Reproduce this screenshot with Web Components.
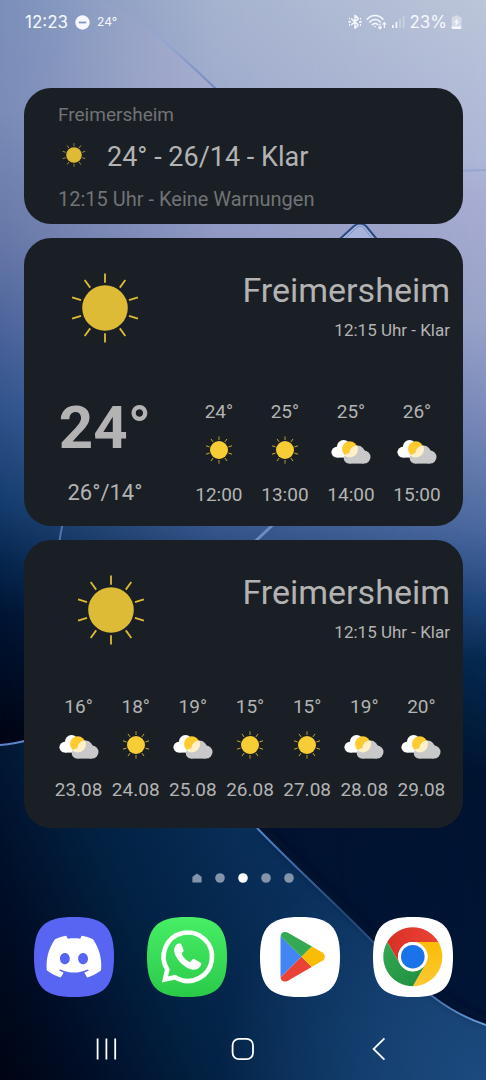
<!DOCTYPE html>
<html lang="de">
<head>
<meta charset="utf-8">
<meta name="viewport" content="width=device-width, initial-scale=1">
<title>Startbildschirm</title>
<style>
  body {
    margin: 0;
    background: #04183a;
    font-family: Roboto, "Liberation Sans", sans-serif;
  }
</style>
</head>
<body>
<home-screen>
  <status-bar time="12:23" temp="24°" battery="23%"></status-bar>

  <main>
    <weather-card>
      <weather-summary place="Freimersheim" icon="sun" text="24° - 26/14 - Klar" note="12:15 Uhr - Keine Warnungen"></weather-summary>
    </weather-card>

    <weather-card>
      <weather-head place="Freimersheim" status="12:15 Uhr - Klar" style="--split: 38fr 62fr"></weather-head>
      <weather-now temp="24°" range="26°/14°">
        <forecast-item temp="24°" icon="sun" label="12:00"></forecast-item>
        <forecast-item temp="25°" icon="sun" label="13:00"></forecast-item>
        <forecast-item temp="25°" icon="cloud" label="14:00"></forecast-item>
        <forecast-item temp="26°" icon="cloud" label="15:00"></forecast-item>
      </weather-now>
    </weather-card>

    <weather-card>
      <weather-head place="Freimersheim" status="12:15 Uhr - Klar" style="--split: 41fr 59fr"></weather-head>
      <weather-week>
        <forecast-item temp="16°" icon="cloud" label="23.08"></forecast-item>
        <forecast-item temp="18°" icon="sun" label="24.08"></forecast-item>
        <forecast-item temp="19°" icon="cloud" label="25.08"></forecast-item>
        <forecast-item temp="15°" icon="sun" label="26.08"></forecast-item>
        <forecast-item temp="15°" icon="sun" label="27.08"></forecast-item>
        <forecast-item temp="19°" icon="cloud" label="28.08"></forecast-item>
        <forecast-item temp="20°" icon="cloud" label="29.08"></forecast-item>
      </weather-week>
    </weather-card>
  </main>

  <page-dots count="5" active="2"></page-dots>

  <app-dock>
    <app-icon name="Discord" icon="discord"></app-icon>
    <app-icon name="WhatsApp" icon="whatsapp"></app-icon>
    <app-icon name="Play Store" icon="play"></app-icon>
    <app-icon name="Chrome" icon="chrome"></app-icon>
  </app-dock>

  <nav-bar></nav-bar>
</home-screen>

<script>
  // Attaches an open shadow root and fills it with styles and markup.
  class BaseElement extends HTMLElement {
    constructor() {
      super();
      this.attachShadow({ mode: "open" });
    }

    connectedCallback() {
      this.shadowRoot.innerHTML = `<style>${this.styles()}</style>${this.markup()}`;
    }

    attr(name) {
      return this.getAttribute(name) || "";
    }
  }

  class HomeScreen extends BaseElement {
    styles() {
      return `
        :host {
          display: flex;
          flex-direction: column;
          position: relative;
          min-height: 100vh;
          overflow: hidden;
        }
        .wallpaper {
          position: absolute;
          inset: 0;
          width: 100%;
          height: 100%;
          z-index: -1;
        }
        ::slotted(main) {
          display: flex;
          flex-direction: column;
          gap: 14px;
          margin: 44px 23px 45px 24px;
        }
      `;
    }

    markup() {
      return `
        <svg class="wallpaper" viewBox="0 0 486 1080" preserveAspectRatio="none" aria-hidden="true">
          <defs>
            <linearGradient id="left" x2="0" y2="1">
              <stop offset="0" stop-color="#7a8fba"/>
              <stop offset=".1" stop-color="#7b8cb8"/>
              <stop offset=".22" stop-color="#6778a8"/>
              <stop offset=".3" stop-color="#4d659c"/>
              <stop offset=".38" stop-color="#2f538b"/>
              <stop offset=".47" stop-color="#143b6c"/>
              <stop offset=".52" stop-color="#06264d"/>
              <stop offset=".57" stop-color="#001433"/>
              <stop offset=".68" stop-color="#000515"/>
              <stop offset=".76" stop-color="#00102c"/>
            </linearGradient>
            <linearGradient id="right" x2="0" y2="1">
              <stop offset="0" stop-color="#bcc5d9"/>
              <stop offset=".15" stop-color="#adb6d6"/>
              <stop offset=".18" stop-color="#a9add3"/>
              <stop offset=".3" stop-color="#98a2c8"/>
              <stop offset=".4" stop-color="#7385b6"/>
              <stop offset=".49" stop-color="#4a689f"/>
              <stop offset=".56" stop-color="#1c4479"/>
              <stop offset=".61" stop-color="#04294f"/>
              <stop offset=".72" stop-color="#001330"/>
              <stop offset="1" stop-color="#001638"/>
            </linearGradient>
            <linearGradient id="fade">
              <stop offset="0" stop-color="#000"/>
              <stop offset=".45" stop-color="#aaa"/>
              <stop offset="1" stop-color="#fff"/>
            </linearGradient>
            <mask id="across"><rect width="486" height="1080" fill="url(#fade)"/></mask>
            <linearGradient id="floor" gradientUnits="userSpaceOnUse" x1="-30" y1="1060" x2="420" y2="860">
              <stop offset="0" stop-color="#00020e"/>
              <stop offset=".2" stop-color="#000d26"/>
              <stop offset=".42" stop-color="#022142"/>
              <stop offset=".68" stop-color="#082d57"/>
              <stop offset="1" stop-color="#0f3766"/>
            </linearGradient>
            <radialGradient id="glow" gradientUnits="userSpaceOnUse" cx="480" cy="1080" r="260">
              <stop offset="0" stop-color="#1c4a7e"/>
              <stop offset="1" stop-color="#1c4a7e" stop-opacity="0"/>
            </radialGradient>
            <linearGradient id="petal" gradientUnits="userSpaceOnUse" x1="60" y1="40" x2="190" y2="100">
              <stop offset="0" stop-color="#a2a5c8" stop-opacity="0"/>
              <stop offset="1" stop-color="#a9abd0" stop-opacity=".5"/>
            </linearGradient>
            <linearGradient id="edge" gradientUnits="userSpaceOnUse" x1="100" y1="0" x2="215" y2="88">
              <stop offset="0" stop-color="#94aad2" stop-opacity="0"/>
              <stop offset=".5" stop-color="#8fa6d2" stop-opacity=".7"/>
              <stop offset="1" stop-color="#7389c0"/>
            </linearGradient>
            <linearGradient id="rim" gradientUnits="userSpaceOnUse" x1="257" y1="828" x2="486" y2="1025">
              <stop offset="0" stop-color="#4f87c4"/>
              <stop offset=".4" stop-color="#204877"/>
              <stop offset=".7" stop-color="#2d5a8e"/>
              <stop offset="1" stop-color="#6a9dd6"/>
            </linearGradient>
            <filter id="soft" x="-10%" y="-10%" width="120%" height="120%"><feGaussianBlur stdDeviation="4"/></filter>
          </defs>
          <rect width="486" height="1080" fill="url(#left)"/>
          <rect width="486" height="1080" fill="url(#right)" mask="url(#across)"/>

          <path d="M60 0H100C145 20 180 55 216 89V110H40Z" fill="url(#petal)"/>
          <path d="M100 0C145 20 180 55 216 89" fill="none" stroke="url(#edge)" stroke-width="2"/>
          <path d="M440 173Q463 170 486 170" fill="none" stroke="#94a6cf" stroke-width="2"/>

          <path d="M330 248 354 227Q360 222 366 227L384 248Z" fill="#a7b3da"/>
          <path d="M330 248 354 226Q360 221 366 226L384 248" fill="none" stroke="#2c4a80" stroke-width="2"/>
          <path d="M336 248 356 228Q360 224 364 228L379 248" fill="none" stroke="#7d94c6" stroke-width="1"/>

          <path d="M64 520Q60 532 59 548" fill="none" stroke="#4c74ad" stroke-width="2"/>
          <path d="M278 520 246 550" fill="none" stroke="#6d8cc2" stroke-width="3"/>
          <path d="M284 520 252 550" fill="none" stroke="#2f5590" stroke-width="1"/>

          <path d="M0 745Q40 741 80 720L257 828C300 872 340 908 372 941 410 978 440 1010 486 1025V1080H0Z" fill="url(#floor)"/>
          <path d="M0 745Q40 741 80 720L257 828C300 872 340 908 372 941 410 978 440 1010 486 1025V1080H0Z" fill="url(#glow)"/>
          <path d="M0 745Q15 744 32 739" fill="none" stroke="#5b86cb" stroke-width="2"/>
          <path d="M262 826C305 870 345 906 377 938 415 974 445 1006 490 1020" fill="none" stroke="#000c26" stroke-width="7" opacity=".6" filter="url(#soft)"/>
          <path d="M257 828C300 872 340 908 372 941 410 978 440 1010 486 1025" fill="none" stroke="url(#rim)" stroke-width="2"/>
        </svg>
        <slot></slot>
      `;
    }
  }

  class StatusBar extends BaseElement {
    styles() {
      return `
        :host {
          display: flex;
          align-items: center;
          justify-content: space-between;
          height: 44px;
          padding: 0 24px 0 25px;
          color: #f6f8fd;
          font-family: Inter, Roboto, sans-serif;
          font-size: 17px;
          line-height: 20px;
        }
        div {
          display: flex;
          align-items: center;
        }
        .left { gap: 7px; }
        .right { gap: 4px; }
        small { font-size: 12px; }
        svg { display: block; }
      `;
    }

    markup() {
      return `
        <div class="left">
          <time>${this.attr("time")}</time>
          <svg width="15" height="15" viewBox="0 0 15 15" aria-hidden="true">
            <circle cx="7.5" cy="7.5" r="7.2" fill="currentColor"/>
            <path d="M3.8 7.5h7.4" stroke="#8497c2" stroke-width="1.8"/>
          </svg>
          <small>${this.attr("temp")}</small>
        </div>
        <div class="right">
          <svg width="14" height="16" viewBox="0 0 14 16" fill="none" stroke="currentColor" stroke-width="1.5" stroke-linejoin="round" aria-hidden="true">
            <path d="M3.2 4.6 10.4 11 7 14.2V1.4L10.4 4.6 3.2 11"/>
            <path d="M.4 7.8h2.4M11.2 7.8h2.4M1 4.6h1M1 11h1M12 4.6h1M12 11h1" stroke-width="1.8"/>
          </svg>
          <svg width="21" height="16" viewBox="0 0 21 16" fill="none" stroke="currentColor" stroke-width="1.5" stroke-linecap="round" aria-hidden="true">
            <path d="M1.2 5.2C5.6.4 12.6.4 17 5.2M3.8 8C6.8 4.8 11.4 4.8 14.4 8M6.4 10.6C8 9 10.2 9 11.8 10.6"/>
            <circle cx="9" cy="12.6" r=".8" fill="currentColor" stroke="none"/>
            <path d="M14 10v4.6M12.6 13.3 14 14.8l1.4-1.5M18.4 13.4V8.8M17 10.2l1.4-1.5 1.4 1.5" stroke-width="1.2"/>
          </svg>
          <svg width="14" height="14" viewBox="0 0 14 14" fill="currentColor" aria-hidden="true">
            <path d="M1 10h1.6v3H1zM4.6 7h1.6v6H4.6z"/>
            <path d="M8.2 4h1.6v9H8.2zM11.8 1h1.6v12h-1.6z" opacity=".35"/>
          </svg>
          <span>${this.attr("battery")}</span>
          <svg width="11" height="15" viewBox="0 0 11 15" aria-hidden="true">
            <path d="M3.2 1.4Q3.2.6 4 .6h3q.8 0 .8.8h1q1.6 0 1.6 1.6v9.4q0 1.6-1.6 1.6H2.2Q.6 14 .6 12.4V3q0-1.6 1.6-1.6Z" fill="#fff" opacity=".4"/>
            <path d="M.6 11.6h9.8v.8q0 1.6-1.6 1.6H2.2Q.6 14 .6 12.4ZM6.6 3 2.8 7.6h2.2L4.4 11 8.2 6.4H6Z" fill="currentColor"/>
          </svg>
        </div>
      `;
    }
  }

  class WeatherIcon extends BaseElement {
    styles() {
      return `
        :host { display: block; color: #ddbb36; }
        svg { display: block; width: 100%; height: 100%; }
      `;
    }

    markup() {
      return this.attr("type") === "cloud" ? this.cloud() : this.sun();
    }

    sun() {
      let rays = "";
      for (let angle = 0; angle < 360; angle += 36) {
        rays += `<path d="M0 -25.2V-34.6" transform="rotate(${angle})"/>`;
      }
      return `
        <svg viewBox="-38 -38 76 76" aria-hidden="true">
          <circle r="22.8" fill="currentColor"/>
          <g stroke="currentColor" stroke-width="1.8">${rays}</g>
        </svg>
      `;
    }

    cloud() {
      const grey = `
        <circle cx="26.3" cy="23.6" r="8"/>
        <circle cx="33" cy="27.1" r="6.5"/>
        <circle cx="18" cy="28.4" r="5.2"/>
        <rect x="18" y="24" width="15" height="9.6"/>
      `;
      return `
        <svg viewBox="0 0 40 40" aria-hidden="true">
          <defs><clipPath id="front">${grey}</clipPath></defs>
          <g fill="#fff">
            <circle cx="5.8" cy="22.2" r="5.4"/>
            <circle cx="12.6" cy="16.8" r="6.7"/>
            <rect x="5.8" y="18" width="14" height="9.6"/>
          </g>
          <circle cx="18.7" cy="19" r="7.7" fill="#ffcb2e"/>
          <g fill="#c9c9c9">${grey}</g>
          <circle cx="18.7" cy="19" r="8.4" fill="#fff0c8" clip-path="url(#front)"/>
        </svg>
      `;
    }
  }

  class WeatherCard extends BaseElement {
    styles() {
      return `
        :host {
          display: block;
          border-radius: 27px;
          background: #1a1f25;
          color: #b3b3b3;
        }
      `;
    }

    markup() {
      return `<slot></slot>`;
    }
  }

  class WeatherSummary extends BaseElement {
    styles() {
      return `
        :host {
          display: flex;
          flex-direction: column;
          gap: 15px;
          padding: 16px 34px 14px;
        }
        p {
          margin: 0;
          color: #717375;
          font-size: 19px;
          line-height: 22px;
        }
        .note { font-size: 20px; }
        .row {
          display: flex;
          align-items: center;
          gap: 20px;
          font-size: 27px;
          line-height: 32px;
        }
        weather-icon {
          width: 26px;
          height: 26px;
          margin: 0 0 4px 3px;
        }
      `;
    }

    markup() {
      return `
        <p>${this.attr("place")}</p>
        <div class="row">
          <weather-icon type="${this.attr("icon")}"></weather-icon>
          <span>${this.attr("text")}</span>
        </div>
        <p class="note">${this.attr("note")}</p>
      `;
    }
  }

  class WeatherHead extends BaseElement {
    styles() {
      return `
        :host {
          display: grid;
          grid-template-columns: var(--split);
          padding: 32px 13px 0 0;
        }
        weather-icon {
          justify-self: center;
          width: 76px;
          height: 76px;
        }
        .text { text-align: right; }
        h2 {
          margin: 0 0 10px;
          font-size: 34px;
          font-weight: 400;
          line-height: 40px;
        }
        p {
          margin: 0;
          font-size: 17px;
          line-height: 20px;
        }
      `;
    }

    markup() {
      return `
        <weather-icon type="sun"></weather-icon>
        <div class="text">
          <h2>${this.attr("place")}</h2>
          <p>${this.attr("status")}</p>
        </div>
      `;
    }
  }

  class WeatherNow extends BaseElement {
    styles() {
      return `
        :host {
          display: grid;
          grid-template-columns: 38fr 62fr;
          align-items: end;
          padding: 50px 13px 20px 0;
        }
        .now {
          display: flex;
          flex-direction: column;
          gap: 20px;
          text-align: center;
        }
        strong {
          font-size: 60px;
          font-weight: 700;
          line-height: 64px;
        }
        .range {
          font-size: 22px;
          line-height: 26px;
        }
        .hours {
          display: grid;
          grid-auto-flow: column;
          grid-auto-columns: 1fr;
        }
      `;
    }

    markup() {
      return `
        <div class="now">
          <strong>${this.attr("temp")}</strong>
          <span class="range">${this.attr("range")}</span>
        </div>
        <div class="hours"><slot></slot></div>
      `;
    }
  }

  class WeatherWeek extends BaseElement {
    styles() {
      return `
        :host {
          display: grid;
          grid-auto-flow: column;
          grid-auto-columns: 1fr;
          padding: 48px 13px 27px 26px;
        }
      `;
    }

    markup() {
      return `<slot></slot>`;
    }
  }

  class ForecastItem extends BaseElement {
    styles() {
      return `
        :host {
          display: flex;
          flex-direction: column;
          align-items: center;
          min-width: 0;
          font-size: 19px;
          line-height: 22px;
        }
        .icon {
          display: grid;
          place-items: center;
          height: 40px;
          margin: 7px 0 14px;
        }
        weather-icon {
          width: 40px;
          height: 40px;
        }
        weather-icon[type="sun"] {
          width: 30px;
          height: 30px;
          color: #f7cd35;
        }
      `;
    }

    markup() {
      return `
        <span>${this.attr("temp")}</span>
        <div class="icon"><weather-icon type="${this.attr("icon")}"></weather-icon></div>
        <span>${this.attr("label")}</span>
      `;
    }
  }

  class PageDots extends BaseElement {
    styles() {
      return `
        :host {
          display: flex;
          justify-content: center;
          gap: 13px;
        }
        button {
          display: block;
          width: 10px;
          height: 10px;
          padding: 0;
          border: 0;
          background: none;
          color: #8495ab;
        }
        button[aria-current] { color: #fff; }
        svg { display: block; }
      `;
    }

    markup() {
      const count = Number(this.attr("count"));
      const active = Number(this.attr("active"));
      let html = "";
      for (let i = 0; i < count; i++) {
        // the first page gets a small house
        const shape = i === 0
          ? `<path d="M5 .4 9.2 3.4Q9.6 3.8 9.6 4.4V9.6H.4V4.4Q.4 3.8.8 3.4Z"/>`
          : `<circle cx="5" cy="5" r="4.8"/>`;
        html += `
          <button type="button" aria-label="Seite ${i + 1}" ${i === active ? 'aria-current="page"' : ""}>
            <svg width="10" height="10" viewBox="0 0 10 10" fill="currentColor">${shape}</svg>
          </button>`;
      }
      return html;
    }
  }

  class AppDock extends BaseElement {
    styles() {
      return `
        :host {
          display: flex;
          justify-content: space-between;
          padding: 34px 33px 0 34px;
        }
      `;
    }

    markup() {
      return `<slot></slot>`;
    }
  }

  const SQUIRCLE = "M0 40C0 10 10 0 40 0S80 10 80 40 70 80 40 80 0 70 0 40Z";

  const APP_ICONS = {
    discord: `
      <path d="${SQUIRCLE}" fill="#5865f2"/>
      <path transform="translate(12.6 12.2) scale(2.28)" fill="#fff" d="M20.317 4.3698a19.7913 19.7913 0 00-4.8851-1.5152.0741.0741 0 00-.0785.0371c-.211.3753-.4447.8648-.6083 1.2495-1.8447-.2762-3.68-.2762-5.4868 0-.1636-.3933-.4058-.8742-.6177-1.2495a.077.077 0 00-.0785-.037 19.7363 19.7363 0 00-4.8852 1.515.0699.0699 0 00-.0321.0277C.5334 9.0458-.319 13.5799.0992 18.0578a.0824.0824 0 00.0312.0561c2.0528 1.5076 4.0413 2.4228 5.9929 3.0294a.0777.0777 0 00.0842-.0276c.4616-.6304.8731-1.2952 1.226-1.9942a.076.076 0 00-.0416-.1057c-.6528-.2476-1.2743-.5495-1.8722-.8923a.077.077 0 01-.0076-.1277c.1258-.0943.2517-.1923.3718-.2914a.0743.0743 0 01.0776-.0105c3.9278 1.7933 8.18 1.7933 12.0614 0a.0739.0739 0 01.0785.0095c.1202.099.246.1981.3728.2924a.077.077 0 01-.0066.1276 12.2986 12.2986 0 01-1.873.8914.0766.0766 0 00-.0407.1067c.3604.698.7719 1.3628 1.225 1.9932a.076.076 0 00.0842.0286c1.961-.6067 3.9495-1.5219 6.0023-3.0294a.077.077 0 00.0313-.0552c.5004-5.177-.8382-9.6739-3.5485-13.6604a.061.061 0 00-.0312-.0286zM8.02 15.3312c-1.1825 0-2.1569-1.0857-2.1569-2.419 0-1.3332.9555-2.4189 2.157-2.4189 1.2108 0 2.1757 1.0952 2.1568 2.419 0 1.3332-.9555 2.4189-2.1569 2.4189zm7.9748 0c-1.1825 0-2.1569-1.0857-2.1569-2.419 0-1.3332.9554-2.4189 2.1569-2.4189 1.2108 0 2.1757 1.0952 2.1568 2.419 0 1.3332-.946 2.4189-2.1568 2.4189Z"/>
    `,
    whatsapp: `
      <defs>
        <linearGradient id="green" x2="0" y2="1">
          <stop offset="0" stop-color="#48ee66"/>
          <stop offset="1" stop-color="#2aca49"/>
        </linearGradient>
      </defs>
      <path d="${SQUIRCLE}" fill="url(#green)"/>
      <path d="M18 62.4 20.3 52.6A24.2 24.2 0 1 1 29.8 61.3L28 60.2Z" fill="none" stroke="#fff" stroke-width="4.6"/>
      <path d="M32 26.6C28.8 27 27 30.5 27.2 34 27.6 40 35 50 44.5 52.4 49.5 53.6 54 50.5 54.2 47 54.2 46 53.5 45.6 52.5 45L47.6 42.3C46.5 41.8 45.8 42 45 43L43.8 44.3C43.2 45 42.5 45 41.5 44.5 39 43 36.3 40.3 35 37.6 34.6 36.8 34.7 36.3 35.4 35.6 36.6 34.4 36.9 33.8 36.5 32.8L34.6 28C34.2 26.9 33.3 26.5 32 26.6Z" fill="#fff"/>
    `,
    play: `
      <defs>
        <clipPath id="triangle"><path d="M20.5 20C20.5 15.6 24 13.8 27.5 15.6L62 35.3C65.8 37.6 65.8 41.8 62 44.1L27.5 63.9C24 65.7 20.5 64 20.5 59.6Z"/></clipPath>
      </defs>
      <path d="${SQUIRCLE}" fill="#fff"/>
      <g clip-path="url(#triangle)">
        <path d="M20 18.5 41.5 39.8 20 61Z" fill="#4285f4"/>
        <path d="M20 18.5V10H72L41.5 39.8Z" fill="#34a853"/>
        <path d="M20 61V70H72L41.5 39.8Z" fill="#ea4335"/>
        <path d="M41.5 39.8 72 10V70Z" fill="#fbbc04"/>
      </g>
    `,
    chrome: `
      <defs>
        <linearGradient id="red"><stop offset="0" stop-color="#d93025"/><stop offset="1" stop-color="#ea4335"/></linearGradient>
        <linearGradient id="yellow" x2="0" y2="1"><stop offset="0" stop-color="#fbbc04"/><stop offset="1" stop-color="#fcc934"/></linearGradient>
        <linearGradient id="leaf" y2="1"><stop offset="0" stop-color="#34a853"/><stop offset="1" stop-color="#1e8e3e"/></linearGradient>
      </defs>
      <path d="${SQUIRCLE}" fill="#fff"/>
      <g transform="translate(39.8 39.7)">
        <path d="M-25.55 -14.75A29.5 29.5 0 0 1 25.55 -14.75H0A14.75 14.75 0 0 0 -12.77 7.38Z" fill="url(#red)"/>
        <path d="M25.55 -14.75A29.5 29.5 0 0 1 0 29.5L12.77 7.38A14.75 14.75 0 0 0 0 -14.75Z" fill="url(#yellow)"/>
        <path d="M0 29.5A29.5 29.5 0 0 1 -25.55 -14.75L-12.77 7.38A14.75 14.75 0 0 0 12.77 7.38Z" fill="url(#leaf)"/>
        <circle r="14.6" fill="#fff"/>
        <circle r="11.8" fill="#1a73e8"/>
      </g>
    `,
  };

  class AppIcon extends BaseElement {
    styles() {
      return `
        :host { display: block; }
        a { display: block; }
        svg {
          display: block;
          width: 80px;
          height: 80px;
        }
      `;
    }

    markup() {
      return `
        <a href="#${this.attr("icon")}" aria-label="${this.attr("name")}">
          <svg viewBox="0 0 80 80">${APP_ICONS[this.attr("icon")]}</svg>
        </a>
      `;
    }
  }

  class NavBar extends BaseElement {
    styles() {
      return `
        :host {
          display: grid;
          grid-template-columns: repeat(3, 1fr);
          height: 62px;
          margin-top: auto;
          padding: 20px 8% 0;
        }
        button {
          display: grid;
          place-items: center;
          padding: 0;
          border: 0;
          background: none;
          color: #fff;
        }
      `;
    }

    markup() {
      const icons = {
        "Letzte Apps": `<path d="M2.6 1.6V22.4M11.4 1.6V22.4M20.2 1.6V22.4"/>`,
        "Startseite": `<rect x="1.6" y="1.8" width="20.4" height="20.4" rx="6.4"/>`,
        "Zurück": `<path d="M17.4 1.4 6.6 12 17.4 22.6"/>`,
      };
      return Object.keys(icons).map((name) => `
        <button type="button" aria-label="${name}">
          <svg width="24" height="24" viewBox="0 0 24 24" fill="none" stroke="currentColor" stroke-width="1.8">${icons[name]}</svg>
        </button>
      `).join("");
    }
  }

  customElements.define("home-screen", HomeScreen);
  customElements.define("status-bar", StatusBar);
  customElements.define("weather-icon", WeatherIcon);
  customElements.define("weather-card", WeatherCard);
  customElements.define("weather-summary", WeatherSummary);
  customElements.define("weather-head", WeatherHead);
  customElements.define("weather-now", WeatherNow);
  customElements.define("weather-week", WeatherWeek);
  customElements.define("forecast-item", ForecastItem);
  customElements.define("page-dots", PageDots);
  customElements.define("app-dock", AppDock);
  customElements.define("app-icon", AppIcon);
  customElements.define("nav-bar", NavBar);
</script>
</body>
</html>
